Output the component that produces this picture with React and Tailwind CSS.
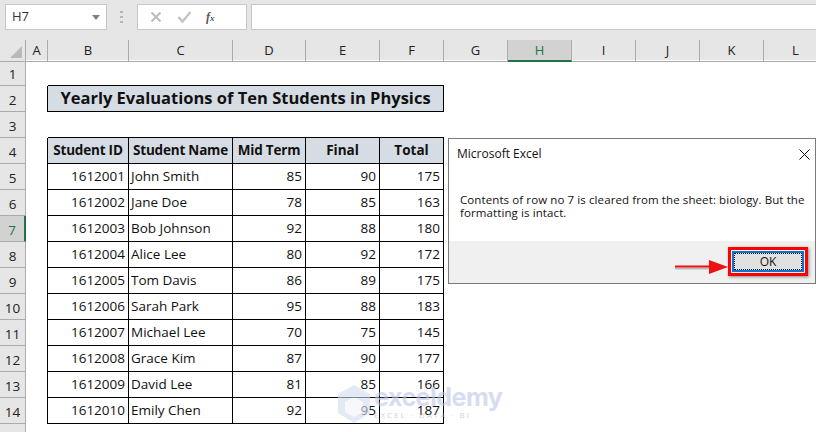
const TPL = "grid grid-cols-[26px_22px_81px_104px_73px_74px_64px_64px_64px_64px_64px_64px_64px]";
const HB = "border-r border-b border-[#ababab]";
const NUM = "border-r border-b border-black text-right pr-[3px] leading-[25px]";
const rows = [
  ["1612001","John Smith",85,90,175],
  ["1612002","Jane Doe",78,85,163],
  ["1612003","Bob Johnson",92,88,180],
  ["1612004","Alice Lee",80,92,172],
  ["1612005","Tom Davis",86,89,175],
  ["1612006","Sarah Park",95,88,183],
  ["1612007","Michael Lee",70,75,145],
  ["1612008","Grace Kim",87,90,177],
  ["1612009","David Lee",81,85,166],
  ["1612010","Emily Chen",92,95,187],
];
function RowHead({ n, selected }) {
  return (
    <div className={selected
      ? "h-[26px] bg-[#d2d2d2] border-r-2 border-r-[#217346] border-b border-b-[#ababab] text-center leading-[29px] text-[#217346]"
      : `h-[26px] bg-[#e6e6e6] ${HB} text-center leading-[29px] text-[#222]`}>{n}</div>
  );
}
const cols = ["A","B","C","D","E","F","G","H","I","J","K","L"];
export default function App() {
  return (
    <div className="relative w-[816px] h-[432px] overflow-hidden bg-white text-[13.5px] text-[#111] font-['Open_Sans','Noto_Sans',sans-serif]">
      <div className="h-[40px] bg-[#e6e6e6] flex items-start pt-[4px]">
        <div className="ml-[5px] w-[102px] h-[26px] bg-white border border-[#c6c6c6] flex items-center justify-between pl-[6px] pr-[6px] text-[13px] text-[#333]">
          <span>H7</span>
          <span className="w-0 h-0 border-x-[4px] border-x-transparent border-t-[5px] border-t-[#7f7f7f]"></span>
        </div>
        <div className="ml-[13px] w-[3px] h-[12px] mt-[7px] flex flex-col justify-between">
          <span className="h-[2px] bg-[#b5b5b5]"></span>
          <span className="h-[2px] bg-[#b5b5b5]"></span>
          <span className="h-[2px] bg-[#b5b5b5]"></span>
        </div>
        <div className="ml-[14px] w-[110px] h-[26px] bg-white border border-[#c6c6c6] flex items-center pl-[12px]">
          <svg width="12" height="12" viewBox="0 0 12 12" fill="none" stroke="#bdbdbd" strokeWidth="2"><path d="M1.5 1.5l9 9M10.5 1.5l-9 9" /></svg>
          <svg className="ml-[15px]" width="15" height="12" viewBox="0 0 15 12" fill="none" stroke="#c4c4c4" strokeWidth="2.4"><path d="M1.5 6l4 4.5L13.5 1" /></svg>
          <span className="ml-[14px] text-[12px] italic font-bold text-[#555] font-['Liberation_Serif',serif]">f<span className="text-[9px]">x</span></span>
        </div>
        <div className="ml-[4px] flex-1 h-[26px] bg-white border border-[#c6c6c6] border-r-0"></div>
      </div>

      <div className={`${TPL} h-[20px] text-[13px] leading-[20px] text-center bg-[#e6e6e6] text-[#222]`}>
        <div className={`${HB} relative`}>
          <span className="absolute right-[3px] bottom-[3px] w-0 h-0 border-l-[12px] border-l-transparent border-b-[12px] border-b-[#b9b9b9]"></span>
        </div>
        {cols.map((c) => (
          <div key={c} className={c === "H"
            ? "bg-[#d2d2d2] border-r border-r-[#ababab] border-b-2 border-b-[#217346] text-[#217346]"
            : HB}>{c}</div>
        ))}
      </div>

      <div className={TPL}>
        <RowHead n={1} />
        <div className="col-span-12"></div>
      </div>
      <div className={TPL}>
        <RowHead n={2} />
        <div className="border-r border-black"></div>
        <div className="col-span-5 bg-[#d6dce4] border-r border-b border-t border-black -mt-px h-[27px] text-center font-bold text-[16.5px] leading-[24px]">Yearly Evaluations of Ten Students in Physics</div>
      </div>
      <div className={TPL}>
        <RowHead n={3} />
        <div className="border-r border-transparent"></div>
        <div className="col-span-5 border-b border-black"></div>
      </div>
      <div className={TPL}>
        <RowHead n={4} />
        <div className="border-r border-black"></div>
        <div className="bg-[#d6dce4] border-r border-b border-black font-bold text-center leading-[25px] tracking-[-0.2px]">Student ID</div>
        <div className="bg-[#d6dce4] border-r border-b border-black font-bold text-center leading-[25px] tracking-[-0.2px]">Student Name</div>
        <div className="bg-[#d6dce4] border-r border-b border-black font-bold text-center leading-[25px] tracking-[-0.2px]">Mid Term</div>
        <div className="bg-[#d6dce4] border-r border-b border-black font-bold text-center leading-[25px]">Final</div>
        <div className="bg-[#d6dce4] border-r border-b border-black font-bold text-center leading-[25px]">Total</div>
      </div>
      {rows.map((r, i) => (
        <div key={r[0]} className={TPL}>
          <RowHead n={i + 5} selected={i === 2} />
          <div className="border-r border-black"></div>
          <div className={NUM}>{r[0]}</div>
          <div className="border-r border-b border-black pl-[2px] leading-[25px]">{r[1]}</div>
          <div className={NUM}>{r[2]}</div>
          <div className={NUM}>{r[3]}</div>
          <div className={NUM}>{r[4]}</div>
        </div>
      ))}
      <div className={TPL}>
        <div className="h-[26px] bg-[#e6e6e6] border-r border-[#ababab]"></div>
      </div>

      <div className="absolute left-[448px] top-[138px] w-[368px] h-[146px] bg-white border border-[#7a7a7a] flex flex-col">
        <div className="flex justify-between items-center pl-[8px] pr-[3px] h-[30px] text-[12px] text-[#111]">
          <span>Microsoft Excel</span>
          <svg className="mr-[2px]" width="11" height="11" viewBox="0 0 11 11" fill="none" stroke="#111" strokeWidth="1"><path d="M.5.5l10 10M10.5.5l-10 10" /></svg>
        </div>
        <div className="flex-1 pl-[11px] pt-[24px] text-[11.5px] leading-[13px] text-[#111] tracking-[0.1px]">
          Contents of row no 7 is cleared from the sheet: biology. But the<br />formatting is intact.
        </div>
        <div className="h-[42px] bg-[#f0f0f0] relative">
          <div className="absolute left-[279px] top-[6px] w-[80px] h-[29px] border-[3px] border-[#ff0000] p-[1px] shadow-[1px_1px_3px_#888]">
            <div className="w-full h-full border-2 border-[#0078d7] bg-[#e1e1e1] flex items-center justify-center text-[12px] text-[#111] outline-1 outline-dotted outline-black -outline-offset-3">OK</div>
          </div>
        </div>
      </div>
      <svg className="absolute left-[674px] top-[258px]" width="56" height="18" viewBox="0 0 56 18">
        <path d="M1 9h34" stroke="#bbb" strokeWidth="2" transform="translate(0 1.5)" />
        <path d="M1 8.5h36" stroke="#ee1111" strokeWidth="2" />
        <path d="M35 2l19 7-19 7z" fill="#ee1111" />
      </svg>

      <div className="absolute left-[336px] top-[384px] flex items-start pointer-events-none opacity-60">
        <svg width="36" height="40" viewBox="0 0 36 40">
          <path d="M18 1l16 9v19l-16 10L2 29V10z" fill="#d3dcf1" />
          <path d="M18 13l9 5v10l-9 5-9-5V18z" fill="#f2f4fb" />
        </svg>
        <div className="ml-[2px] flex flex-col">
          <span className="text-[25px] leading-[26px] font-bold text-[#bcc8eb] font-['Inter',sans-serif] tracking-[-0.5px]">exceldemy</span>
          <span className="text-[8px] leading-[10px] tracking-[2px] text-[#b5b5b5]">EXCEL · DATA · BI</span>
        </div>
      </div>
    </div>
  );
}
